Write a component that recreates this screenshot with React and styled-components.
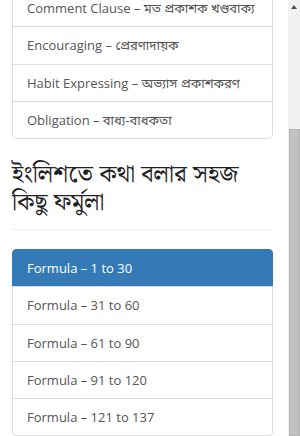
import React from "react";
import styled, { createGlobalStyle } from "styled-components";

const Global = createGlobalStyle`
    html, body {
        margin: 0;
        padding: 0;
        background: #fff;
        overflow: hidden;
    }
    * { box-sizing: border-box; }
`;

const Page = styled.div`
    display: flex;
    width: 300px;
    height: 436px;
    overflow: hidden;
`;

const Main = styled.div`
    width: 288px;
    padding: 0 15px 0 12px;
    font-family: "Open Sans", "Noto Sans Bengali", "Noto Sans", sans-serif;
`;

const List = styled.ul`
    list-style: none;
    margin: ${(p) => p.$top || "0"} 0 0 0;
    padding: 0;
`;

const Item = styled.li`
    display: block;
    padding: 10px 14px;
    font-size: 13px;
    line-height: 16.25px;
    color: ${(p) => (p.$active ? "#fff" : "#555")};
    background: ${(p) => (p.$active ? "#337ab7" : "#fff")};
    border: 1px solid ${(p) => (p.$active ? "#337ab7" : "#ddd")};
    margin-bottom: -1px;
    white-space: nowrap;
    &:first-child {
        border-top-left-radius: 4px;
        border-top-right-radius: 4px;
    }
    &:last-child {
        border-bottom-left-radius: 4px;
        border-bottom-right-radius: 4px;
    }
`;

const Heading = styled.h2`
    margin: 23px 0 0 0;
    padding-bottom: 12px;
    border-bottom: 1px solid #eee;
    font-family: "Noto Serif Bengali", "Noto Sans Bengali", serif;
    font-weight: 400;
    font-size: 24.5px;
    line-height: 28px;
    color: #222;
`;

const Scrollbar = styled.div`
    width: 12px;
    background: #f1f1f1;
    display: flex;
    flex-direction: column;
`;

const Arrow = styled.div`
    height: 14px;
    display: flex;
    align-items: center;
    justify-content: center;
`;

const Track = styled.div`
    flex: 0 0 115px;
`;

const Thumb = styled.div`
    flex: 1;
    margin-left: 1px;
    background: #c1c1c1;
    border: 1px solid #b5b5b5;
`;

const topItems = [
    "Comment Clause – মত প্রকাশক খণ্ডবাক্য",
    "Encouraging – প্রেরণাদায়ক",
    "Habit Expressing – অভ্যাস প্রকাশকরণ",
    "Obligation – বাধ্য-বাধকতা",
];

const formulas = [
    "Formula – 1 to 30",
    "Formula – 31 to 60",
    "Formula – 61 to 90",
    "Formula – 91 to 120",
    "Formula – 121 to 137",
];

export default function App() {
    return (
        <Page>
            <Global />
            <Main>
                <List $top="-11px">
                    {topItems.map((t) => (
                        <Item key={t}>{t}</Item>
                    ))}
                </List>
                <Heading>ইংলিশতে কথা বলার সহজ কিছু ফর্মুলা</Heading>
                <List $top="19px">
                    {formulas.map((t, i) => (
                        <Item key={t} $active={i === 0}>
                            {t}
                        </Item>
                    ))}
                </List>
            </Main>
            <Scrollbar>
                <Arrow>
                    <svg width="6" height="4" viewBox="0 0 6 4">
                        <path d="M0 4 L3 0 L6 4 Z" fill="#505050" />
                    </svg>
                </Arrow>
                <Track />
                <Thumb />
            </Scrollbar>
        </Page>
    );
}
